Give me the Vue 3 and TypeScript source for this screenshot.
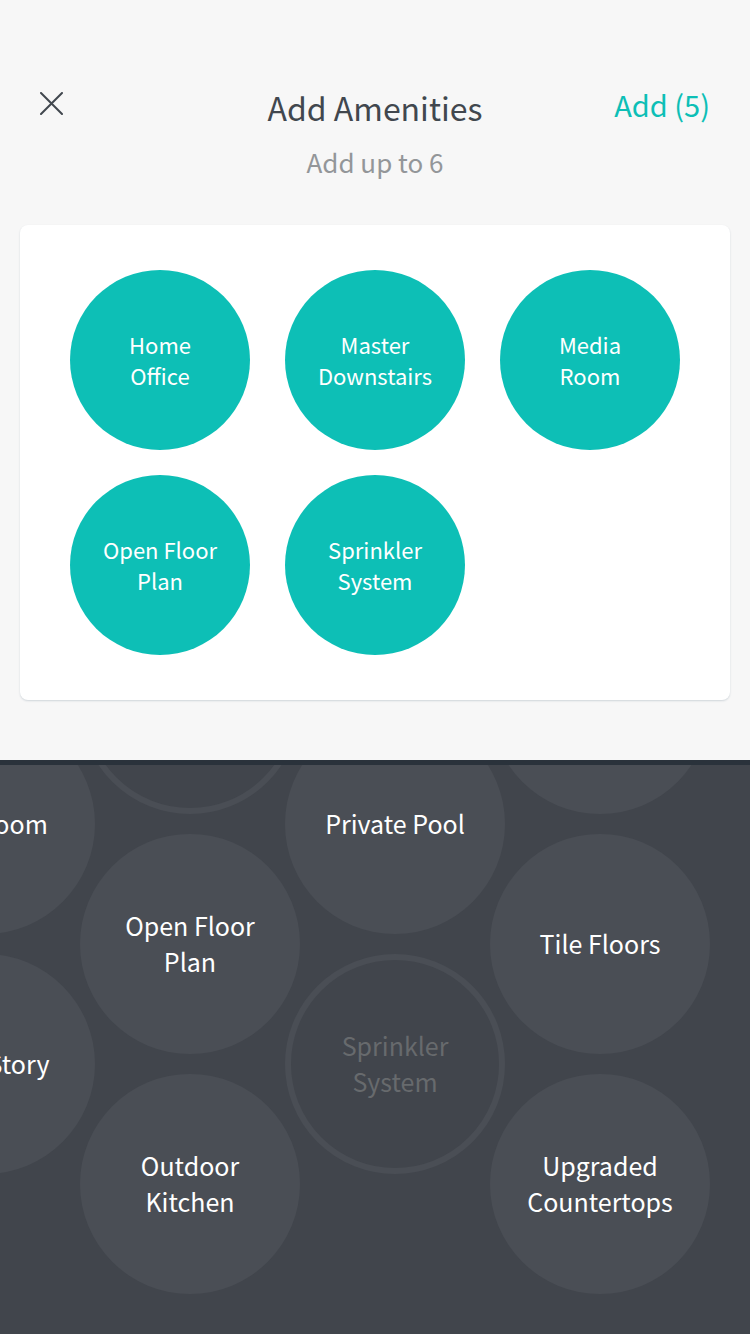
<script setup lang="ts">
import { computed, ref } from 'vue'

interface Amenity {
  label: string
  chosen?: boolean
}

const limit = 6
const selected = ref<string[]>([
  'Home\nOffice',
  'Master\nDownstairs',
  'Media\nRoom',
  'Open Floor\nPlan',
  'Sprinkler\nSystem',
])
const count = computed(() => selected.value.length)

const columns: Amenity[][] = [
  [{ label: 'Mud Room' }, { label: 'Multi-Story' }],
  [{ label: 'Media\nRoom', chosen: true }, { label: 'Open Floor\nPlan' }, { label: 'Outdoor\nKitchen' }],
  [{ label: 'Private Pool' }, { label: 'Sprinkler\nSystem', chosen: true }],
  [{ label: 'Study' }, { label: 'Tile Floors' }, { label: 'Upgraded\nCountertops' }],
]

function remove(label: string) {
  selected.value = selected.value.filter((item) => item !== label)
}

function add(label: string) {
  if (count.value < limit) selected.value.push(label)
}
</script>

<template>
  <main class="page">
    <header class="header">
      <button class="close" type="button" aria-label="Close">
        <svg width="23" height="23" viewBox="0 0 23 23" fill="none" stroke="currentColor" stroke-width="2" stroke-linecap="round">
          <path d="M1 1L22 22M22 1L1 22" />
        </svg>
      </button>
      <h1 class="title">Add Amenities</h1>
      <button class="submit" type="button">Add ({{ count }})</button>
      <p class="hint">Add up to {{ limit }}</p>
    </header>

    <section class="card" aria-label="Selected amenities">
      <button v-for="label in selected" :key="label" class="chip" type="button" @click="remove(label)">{{ label }}</button>
    </section>

    <section class="picker" aria-label="Available amenities">
      <div v-for="(column, index) in columns" :key="index" class="column">
        <button
          v-for="item in column"
          :key="item.label"
          class="bubble"
          :class="{ chosen: item.chosen }"
          :disabled="item.chosen"
          type="button"
          @click="add(item.label)"
        >{{ item.label }}</button>
      </div>
    </section>
  </main>
</template>

<style>
body {
  margin: 0;
  background: #f7f7f7;
}
</style>

<style scoped>
.page {
  display: flex;
  flex-direction: column;
  height: 100vh;
  font-family: "Noto Sans CJK SC", "Noto Sans", sans-serif;
  color: #41474e;
}

button {
  margin: 0;
  padding: 0;
  border: 0;
  background: none;
  font-family: inherit;
  font-weight: 400;
  cursor: pointer;
}

.header {
  flex: none;
  display: grid;
  grid-template-columns: 1fr auto 1fr;
  align-items: center;
  padding: 82px 40px 43px;
}

.close {
  display: flex;
  justify-self: start;
  padding-bottom: 7px;
  color: #41474e;
}

.title {
  margin: 0;
  font-size: 32px;
  line-height: 50px;
  font-weight: 400;
}

.submit {
  justify-self: end;
  padding-bottom: 6px;
  color: #0dbfb6;
  font-size: 29px;
  line-height: 40px;
}

.hint {
  grid-column: 1 / -1;
  margin: 10px 0 0;
  color: #939699;
  font-size: 26px;
  line-height: 40px;
  text-align: center;
}

.card {
  flex: none;
  display: grid;
  grid-template-columns: repeat(3, 180px);
  justify-content: space-between;
  row-gap: 25px;
  margin: 0 20px 60px;
  padding: 45px 50px;
  border-radius: 8px;
  background: #fff;
  box-shadow: 0 1px 2px #cfd5da;
}

.chip,
.bubble {
  border-radius: 50%;
  color: #fff;
  text-align: center;
  white-space: pre-line;
}

.chip {
  width: 180px;
  height: 180px;
  background: #0dbfb6;
  font-size: 22px;
  line-height: 31px;
}

.picker {
  flex: 1 1 0;
  min-height: 0;
  display: flex;
  align-items: flex-end;
  justify-content: flex-end;
  box-sizing: border-box;
  padding: 0 40px 40px;
  border-top: 5px solid #2a323b;
  background: #41454c;
  overflow: hidden;
}

.column {
  flex: none;
  display: flex;
  flex-direction: column;
  gap: 20px;
}

.column + .column {
  margin-left: -15px;
}

.column:nth-child(odd) {
  margin-bottom: 120px;
}

.bubble {
  width: 220px;
  height: 220px;
  padding-bottom: 2px;
  background: #4a4e55;
  font-size: 25px;
  line-height: 36px;
}

.bubble.chosen {
  border: 6px solid #4a4e55;
  background: transparent;
  color: #676a6d;
  cursor: default;
}
</style>
